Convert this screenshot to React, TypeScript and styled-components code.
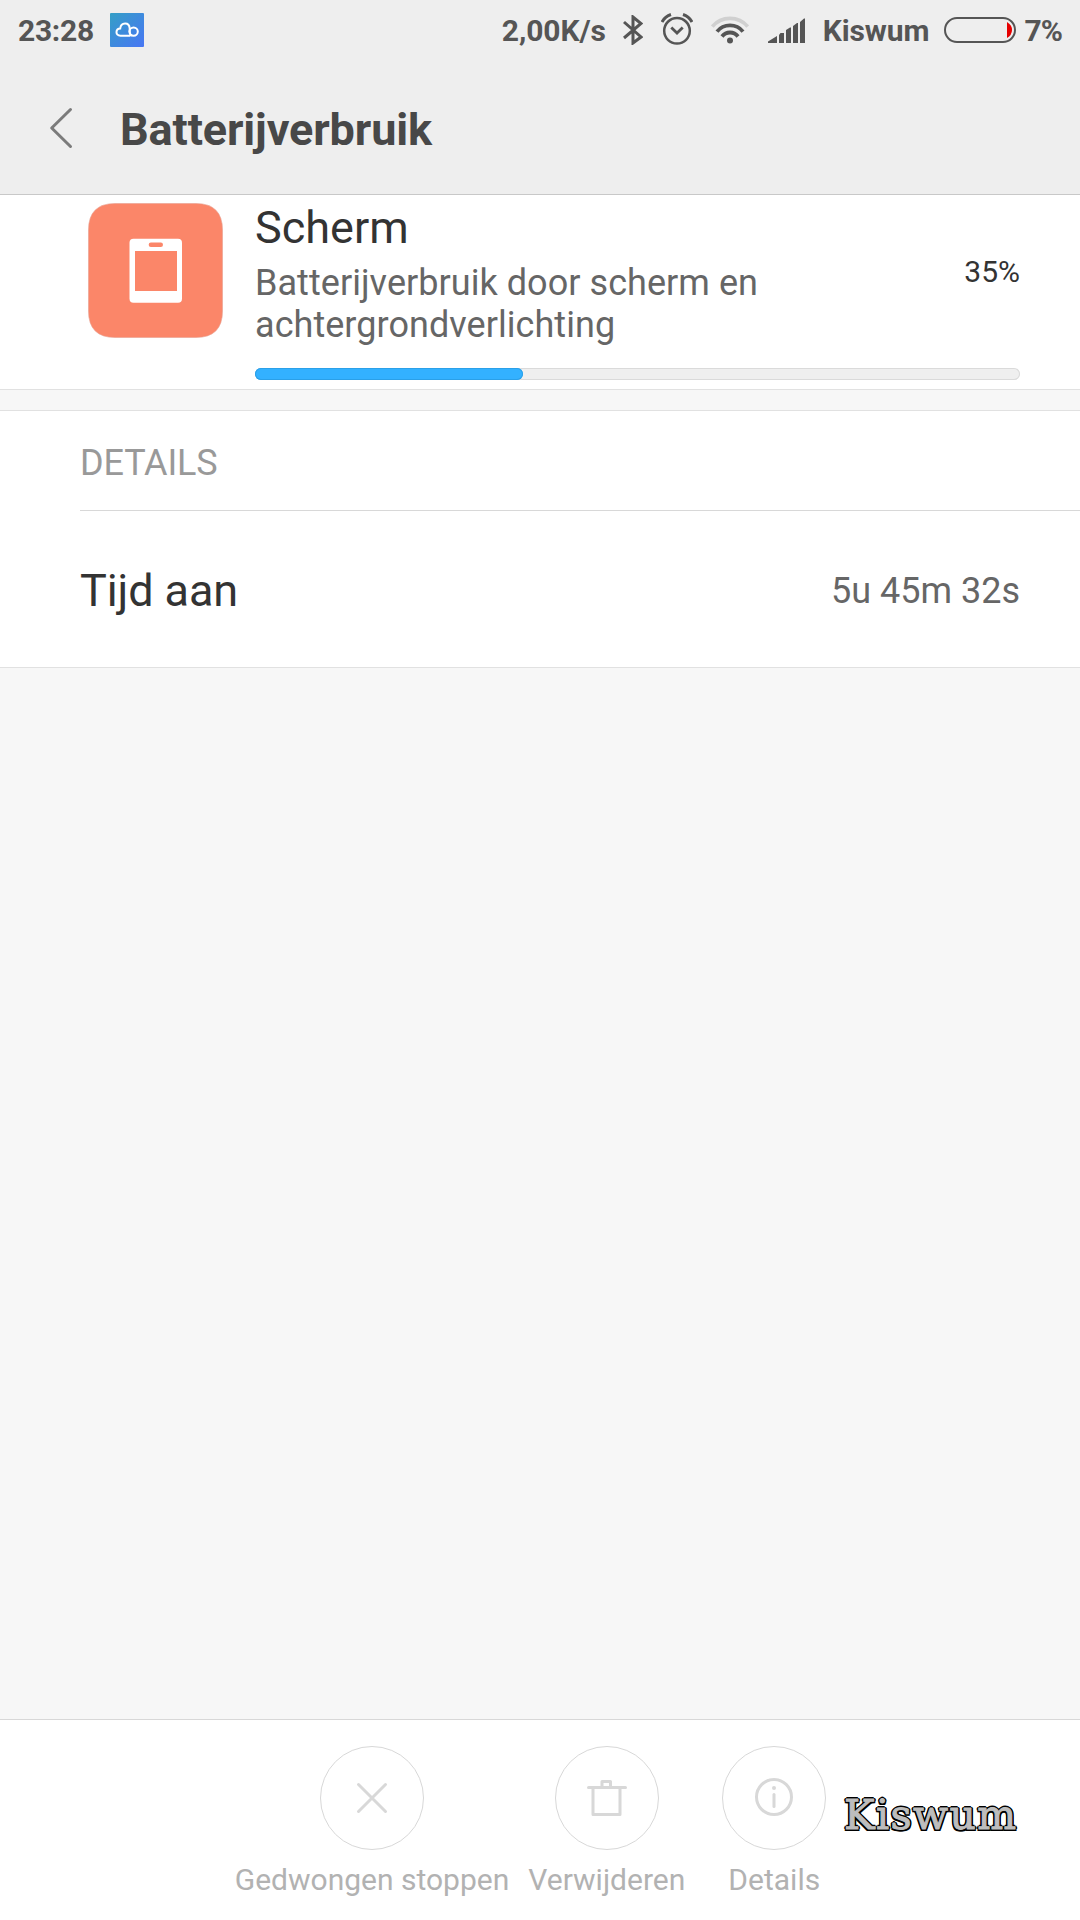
import React from "react";
import styled, { createGlobalStyle } from "styled-components";

const GlobalStyle = createGlobalStyle`
  *, *::before, *::after { box-sizing: border-box; }
  body { margin: 0; background: #f7f7f7; }
`;

const Screen = styled.div`
  position: relative;
  width: 1080px;
  height: 1920px;
  display: flex;
  flex-direction: column;
  overflow: hidden;
  background: #f7f7f7;
  font-family: Roboto, "Noto Sans", sans-serif;
  color: #333;
  white-space: nowrap;

  svg { display: block; flex: none; }
`;

const Header = styled.header`
  height: 195px;
  flex: none;
  display: flex;
  flex-direction: column;
  background: #eee;
  border-bottom: 1px solid #c8c8c8;
`;

const StatusBar = styled.div`
  height: 60px;
  padding: 0 18px;
  display: flex;
  align-items: center;
  justify-content: space-between;
  color: #555;
`;

const StatusGroup = styled.div`
  display: flex;
  align-items: center;
`;

const StatusItem = styled.div<{ $gap: number }>`
  margin-left: ${(p) => p.$gap}px;
`;

const StatusText = styled.span<{ $gap?: number; $spacing?: number }>`
  margin-left: ${(p) => p.$gap ?? 0}px;
  padding-top: 2px;
  font-size: 30px;
  line-height: 36px;
  font-weight: 700;
  letter-spacing: ${(p) => p.$spacing ?? -0.1}px;
`;

const TitleBar = styled.div`
  flex: 1;
  padding: 0 0 0 48px;
  display: flex;
  align-items: center;
  gap: 46px;
`;

const Title = styled.h1`
  margin: 0;
  padding-top: 4px;
  font-size: 45px;
  line-height: 53px;
  font-weight: 700;
  letter-spacing: -0.12px;
  color: #484848;
`;

const Summary = styled.section`
  height: 195px;
  flex: none;
  display: flex;
  padding: 8px 60px 0 88px;
  background: #fff;
  border-bottom: 1px solid #e1e1e1;
`;

const SummaryBody = styled.div`
  flex: 1;
  margin-left: 32px;
  display: flex;
  flex-direction: column;
`;

const SummaryRow = styled.div`
  height: 165px;
  display: flex;
  justify-content: space-between;
`;

const AppName = styled.div`
  margin-top: -2px;
  font-size: 45px;
  line-height: 53px;
`;

const Description = styled.div`
  width: 560px;
  margin-top: 8px;
  font-size: 36px;
  line-height: 42px;
  letter-spacing: 0.05px;
  white-space: normal;
  color: #666;
`;

const Percent = styled.div`
  margin-top: 51px;
  font-size: 30px;
  line-height: 35px;
`;

const Track = styled.div`
  height: 12px;
  border-radius: 6px;
  background: #efefef;
  box-shadow: inset 0 0 0 1px #dadada;
`;

const Fill = styled.div`
  width: 268px;
  height: 12px;
  border-radius: 6px;
  background: #33b1ff;
  box-shadow: inset 0 0 0 1px #2ba0e8;
`;

const Details = styled.section`
  flex: none;
  height: 258px;
  margin-top: 20px;
  padding-left: 80px;
  display: flex;
  flex-direction: column;
  background: #fff;
  border-top: 1px solid #e1e1e1;
  border-bottom: 1px solid #e1e1e1;
`;

const SectionTitle = styled.h2`
  margin: 0;
  height: 100px;
  padding-top: 31px;
  font-size: 36px;
  line-height: 42px;
  font-weight: 400;
  letter-spacing: -0.15px;
  color: #999;
  border-bottom: 1px solid #d8d8d8;
`;

const DetailRow = styled.div`
  flex: 1;
  padding-right: 60px;
  padding-top: 3px;
  display: flex;
  align-items: center;
  justify-content: space-between;
`;

const DetailLabel = styled.span`
  font-size: 45px;
  line-height: 53px;
  letter-spacing: -0.1px;
`;

const DetailValue = styled.span`
  font-size: 36px;
  line-height: 42px;
  color: #666;
`;

const ActionBar = styled.footer`
  height: 201px;
  margin-top: auto;
  padding: 26px 1px 0 0;
  display: flex;
  justify-content: center;
  gap: 19px;
  background: #fff;
  border-top: 1px solid #d8d8d8;
`;

const Action = styled.div`
  min-width: 140px;
  display: flex;
  flex-direction: column;
  align-items: center;
  font-size: 30px;
  line-height: 35px;
  color: #b2b2b2;
`;

const Circle = styled.div`
  width: 104px;
  height: 104px;
  margin-bottom: 12px;
  display: flex;
  align-items: center;
  justify-content: center;
  border: 1px solid #d8d8d8;
  border-radius: 50%;
`;

const Watermark = styled.div`
  position: absolute;
  left: 844px;
  top: 1791px;
  font-family: "DejaVu Serif", serif;
  font-size: 41px;
  line-height: 48px;
  letter-spacing: 1.4px;
  color: #bdbdbd;
  -webkit-text-stroke: 1px #bdbdbd;
  text-shadow:
    2px 0 #000, -2px 0 #000, 0 2px #000, 0 -2px #000,
    1.5px 1.5px #000, -1.5px 1.5px #000, 1.5px -1.5px #000, -1.5px -1.5px #000;
`;

const CloudIcon = () => (
  <svg width="34" height="34" viewBox="0 0 34 34">
    <defs>
      <linearGradient id="cloud" x1="0" y1="0" x2="1" y2="1">
        <stop offset="0" stopColor="#349fc6" />
        <stop offset="1" stopColor="#4876f4" />
      </linearGradient>
    </defs>
    <rect width="34" height="34" rx="1" fill="url(#cloud)" />
    <g fill="none" stroke="#fff" strokeWidth="2">
      <path d="M20.5 22.7H10.5C5 22.7 5.4 15.6 10.2 15.5C11 9 19.2 8.7 19.7 15.4V19C19.8 20.5 20.5 22 22 22.6" />
      <circle cx="23.6" cy="18.6" r="4.2" />
    </g>
  </svg>
);

const BluetoothIcon = () => (
  <svg width="20" height="30" viewBox="0 0 20 30">
    <path d="M1 7L18 22L10 28V2L18 8.5L1 23" fill="none" stroke="#555" strokeWidth="3" />
  </svg>
);

const AlarmIcon = () => (
  <svg width="32" height="34" viewBox="0 0 32 34" fill="none" stroke="#555">
    <circle cx="16" cy="17.8" r="12.8" strokeWidth="2.5" />
    <path d="M10.3 14.5L16 20L21.7 14.5" strokeWidth="2.8" />
    <path d="M1 9Q4 3.5 10 1.5M31 9Q28 3.5 22 1.5" strokeWidth="3" />
  </svg>
);

const WifiIcon = () => (
  <svg width="38" height="30" viewBox="0 0 38 30" fill="none" strokeWidth="3.8">
    <path d="M1.3 11.6Q8 3.3 19 3.3T36.7 11.6" stroke="#d0d0d0" />
    <path d="M6 16.6Q11 10.4 19 10.4T32 16.6" stroke="#555" />
    <path d="M11 21.5Q14 17.5 19 17.5T27 21.5" stroke="#555" />
    <circle cx="19" cy="25.5" r="3" fill="#555" />
  </svg>
);

const SignalIcon = () => (
  <svg width="37" height="26" viewBox="0 0 37 26" fill="#555">
    <path d="M0 26V24.5L9 19V26ZM11 26V18L12.500 16H16V26ZM18 26V13L22 10.500H23V26ZM25 26V9L29 6H30V26ZM32 26V5L36 1.500H37V26Z" />
  </svg>
);

const BatteryIcon = () => (
  <svg width="72" height="26" viewBox="0 0 72 26">
    <rect x="1" y="1" width="70" height="24" rx="12" fill="none" stroke="#555" strokeWidth="2" />
    <path d="M63 5Q68 8 68 13T63 21Z" fill="#e60000" />
  </svg>
);

const BackIcon = () => (
  <svg width="26" height="44" viewBox="0 0 26 44">
    <path d="M22.5 4.5L3.7 23L22.5 41.5" fill="none" stroke="#7b7b7b" strokeWidth="3" strokeLinecap="round" strokeLinejoin="round" />
  </svg>
);

const ScreenIcon = () => (
  <svg width="135" height="135" viewBox="0 0 135 135">
    <path
      d="M27 .5H108Q134.5 .5 134.5 27V108Q134.5 134.5 108 134.5H27Q.5 134.5 .5 108V27Q.5 .5 27 .5Z"
      fill="#fb8669"
      stroke="#e8a090"
      strokeWidth=".6"
    />
    <rect x="41.5" y="35.7" width="52.5" height="64" rx="4" fill="#fff" />
    <rect x="60.7" y="39.5" width="14.3" height="4.5" rx="2.2" fill="#fb8669" />
    <rect x="47" y="48" width="42" height="40" fill="#fb8669" />
  </svg>
);

const StopIcon = () => (
  <svg width="40" height="40" viewBox="0 0 40 40">
    <path d="M6.5 6.5L33.5 33.5M33.5 6.5L6.5 33.5" stroke="#d8d8d8" strokeWidth="3" strokeLinecap="round" />
  </svg>
);

const TrashIcon = () => (
  <svg width="40" height="40" viewBox="0 0 40 40" fill="none" stroke="#d8d8d8" strokeWidth="3">
    <path d="M1.5 9.5H38.5" strokeLinecap="round" />
    <path d="M6 9.5V36.500H33V9.5M15 9V3.500H23.500V9" strokeLinejoin="round" />
  </svg>
);

const InfoIcon = () => (
  <svg width="40" height="40" viewBox="0 0 40 40" fill="none" stroke="#d8d8d8" strokeWidth="3">
    <circle cx="20" cy="19" r="17.5" />
    <circle cx="20" cy="10" r="2" fill="#d8d8d8" stroke="none" />
    <path d="M20 16.500V28.500" strokeLinecap="round" />
  </svg>
);

const actions = [
  { label: "Gedwongen stoppen", Icon: StopIcon },
  { label: "Verwijderen", Icon: TrashIcon },
  { label: "Details", Icon: InfoIcon },
];

export default function App() {
  return (
    <Screen>
      <GlobalStyle />
      <Header>
        <StatusBar>
          <StatusGroup>
            <StatusText $spacing={-0.3}>23:28</StatusText>
            <StatusItem $gap={16}><CloudIcon /></StatusItem>
          </StatusGroup>
          <StatusGroup>
            <StatusText>2,00K/s</StatusText>
            <StatusItem $gap={17}><BluetoothIcon /></StatusItem>
            <StatusItem $gap={18}><AlarmIcon /></StatusItem>
            <StatusItem $gap={18}><WifiIcon /></StatusItem>
            <StatusItem $gap={19}><SignalIcon /></StatusItem>
            <StatusText $gap={18}>Kiswum</StatusText>
            <StatusItem $gap={15}><BatteryIcon /></StatusItem>
            <StatusText $gap={8} $spacing={-0.9}>7%</StatusText>
          </StatusGroup>
        </StatusBar>
        <TitleBar>
          <BackIcon />
          <Title>Batterijverbruik</Title>
        </TitleBar>
      </Header>

      <Summary>
        <ScreenIcon />
        <SummaryBody>
          <SummaryRow>
            <div>
              <AppName>Scherm</AppName>
              <Description>Batterijverbruik door scherm en achtergrondverlichting</Description>
            </div>
            <Percent>35%</Percent>
          </SummaryRow>
          <Track><Fill /></Track>
        </SummaryBody>
      </Summary>

      <Details>
        <SectionTitle>DETAILS</SectionTitle>
        <DetailRow>
          <DetailLabel>Tijd aan</DetailLabel>
          <DetailValue>5u 45m 32s</DetailValue>
        </DetailRow>
      </Details>

      <ActionBar>
        {actions.map(({ label, Icon }) => (
          <Action key={label}>
            <Circle><Icon /></Circle>
            {label}
          </Action>
        ))}
      </ActionBar>

      <Watermark>Kiswum</Watermark>
    </Screen>
  );
}
